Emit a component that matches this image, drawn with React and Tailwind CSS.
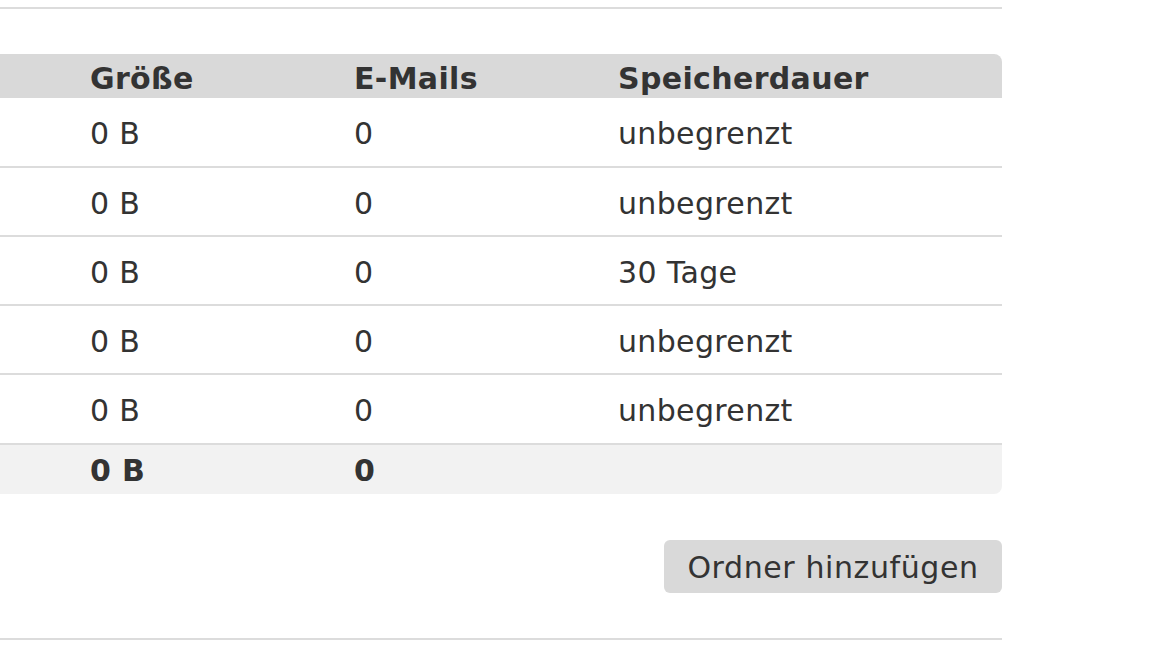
import React from 'react';

const rows = [
    { size: '0 B', mails: '0', keep: 'unbegrenzt' },
    { size: '0 B', mails: '0', keep: 'unbegrenzt' },
    { size: '0 B', mails: '0', keep: '30 Tage' },
    { size: '0 B', mails: '0', keep: 'unbegrenzt' },
    { size: '0 B', mails: '0', keep: 'unbegrenzt' },
];

const App = () => {
    return (
        <div
            className="w-[1152px] h-[648px] bg-white text-[#333] overflow-hidden tracking-[0.35px]"
            style={{ fontFamily: '"DejaVu Sans", Verdana, sans-serif' }}
        >
            <div className="w-[1002px]">
                <div className="h-[7px]" />
                <div className="h-[2px] bg-[#dcdcdc]" />
                <div className="h-[45px]" />

                <div className="grid grid-cols-[90px_264px_264px_1fr] h-[44px] pt-[5px] items-center bg-[#d9d9d9] rounded-tr-lg text-[30px] font-bold leading-none">
                    <div />
                    <div>Größe</div>
                    <div>E-Mails</div>
                    <div>Speicherdauer</div>
                </div>

                {rows.map((r, i) => (
                    <div
                        key={i}
                        className={
                            'grid grid-cols-[90px_264px_264px_1fr] items-center pt-[4px] border-b-2 border-[#dcdcdc] text-[30px] leading-none ' +
                            (i === 0 || i === rows.length - 1 ? 'h-[70px]' : 'h-[69px]')
                        }
                    >
                        <div />
                        <div>{r.size}</div>
                        <div>{r.mails}</div>
                        <div>{r.keep}</div>
                    </div>
                ))}

                <div className="grid grid-cols-[90px_264px_264px_1fr] h-[49px] pt-[3px] items-center bg-[#f2f2f2] rounded-br-lg text-[30px] font-bold leading-none">
                    <div />
                    <div>0 B</div>
                    <div>0</div>
                    <div />
                </div>

                <div className="flex justify-end pt-[46px]">
                    <button className="h-[53px] w-[338px] pt-[3px] rounded-md bg-[#d9d9d9] text-[30px] leading-none tracking-[0.6px] text-[#333]">
                        Ordner hinzufügen
                    </button>
                </div>

                <div className="h-[45px]" />
                <div className="h-[2px] bg-[#dcdcdc]" />
            </div>
        </div>
    );
};

export default App;
